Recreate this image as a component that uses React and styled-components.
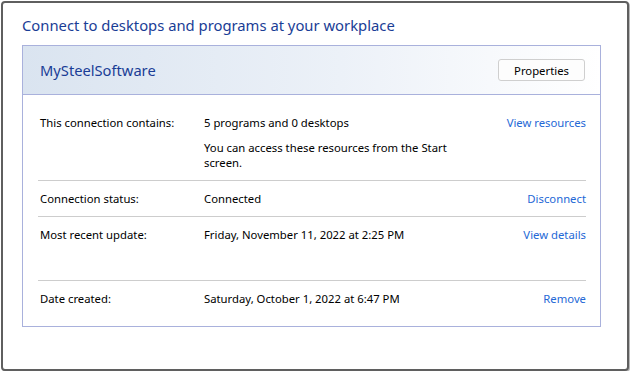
import React from "react";
import styled, { createGlobalStyle } from "styled-components";

const Global = createGlobalStyle`
  html, body {
    margin: 0;
    padding: 0;
    background: #ffffff;
  }
  body {
    font-family: "Noto Sans", "Open Sans", sans-serif;
    font-size: 11.3px;
    color: #000;
  }
`;

const Window = styled.div`
  box-sizing: border-box;
  margin: 1px 0 0 1px;
  width: 628px;
  height: 370px;
  border: 2px solid #5f5f5f;
  border-radius: 4px;
  box-shadow: 1px 1px 0 #b8b8b8;
  padding: 12px 26px 0 19px;
  background: #fff;
`;

const Heading = styled.h1`
  margin: 0;
  font-size: 14.8px;
  font-weight: 400;
  color: #1a3d96;
  line-height: 20px;
`;

const Panel = styled.section`
  margin-top: 10px;
  border: 1px solid #a9b1dc;
`;

const PanelHeader = styled.header`
  display: flex;
  align-items: center;
  justify-content: space-between;
  height: 48px;
  padding: 0 15px 0 17px;
  background: linear-gradient(to right, #dae4f0 0%, #ecf1f8 55%, #ffffff 100%);
  border-bottom: 1px solid #a9b1dc;
`;

const Name = styled.div`
  font-size: 14.7px;
  color: #1a3d96;
`;

const Button = styled.button`
  font-family: inherit;
  font-size: 11.3px;
  color: #000;
  background: #fdfdfd;
  border: 1px solid #cfcfcf;
  border-radius: 3px;
  width: 87px;
  height: 22px;
  padding: 0;
`;

const Rows = styled.div`
  padding: 0 14px 0 15px;
`;

const Row = styled.div`
  display: grid;
  grid-template-columns: 166px 250px 1fr;
  padding-top: ${(p) => p.$top}px;
  height: ${(p) => p.$h}px;
  box-sizing: border-box;
  border-bottom: ${(p) => (p.$last ? "none" : "1px solid #cdcdcd")};
  line-height: 15px;
`;

const Label = styled.div`
  padding-left: 2px;
`;

const Value = styled.div`
  display: flex;
  flex-direction: column;
  gap: 10px;
`;

const Action = styled.a`
  justify-self: end;
  color: #2468d6;
  text-decoration: none;
  cursor: pointer;
`;

const rows = [
  {
    label: "This connection contains:",
    value: ["5 programs and 0 desktops", "You can access these resources from the Start screen."],
    action: "View resources",
    top: 20,
    h: 86,
  },
  { label: "Connection status:", value: ["Connected"], action: "Disconnect", top: 10, h: 36 },
  { label: "Most recent update:", value: ["Friday, November 11, 2022 at 2:25 PM"], action: "View details", top: 10, h: 64 },
  { label: "Date created:", value: ["Saturday, October 1, 2022 at 6:47 PM"], action: "Remove", top: 10, h: 45, last: true },
];

export default function App() {
  return (
    <>
      <Global />
      <Window>
        <Heading>Connect to desktops and programs at your workplace</Heading>
        <Panel>
          <PanelHeader>
            <Name>MySteelSoftware</Name>
            <Button>Properties</Button>
          </PanelHeader>
          <Rows>
            {rows.map((r) => (
              <Row key={r.label} $top={r.top} $h={r.h} $last={r.last}>
                <Label>{r.label}</Label>
                <Value>
                  {r.value.map((v) => (
                    <span key={v}>{v}</span>
                  ))}
                </Value>
                <Action>{r.action}</Action>
              </Row>
            ))}
          </Rows>
        </Panel>
      </Window>
    </>
  );
}
